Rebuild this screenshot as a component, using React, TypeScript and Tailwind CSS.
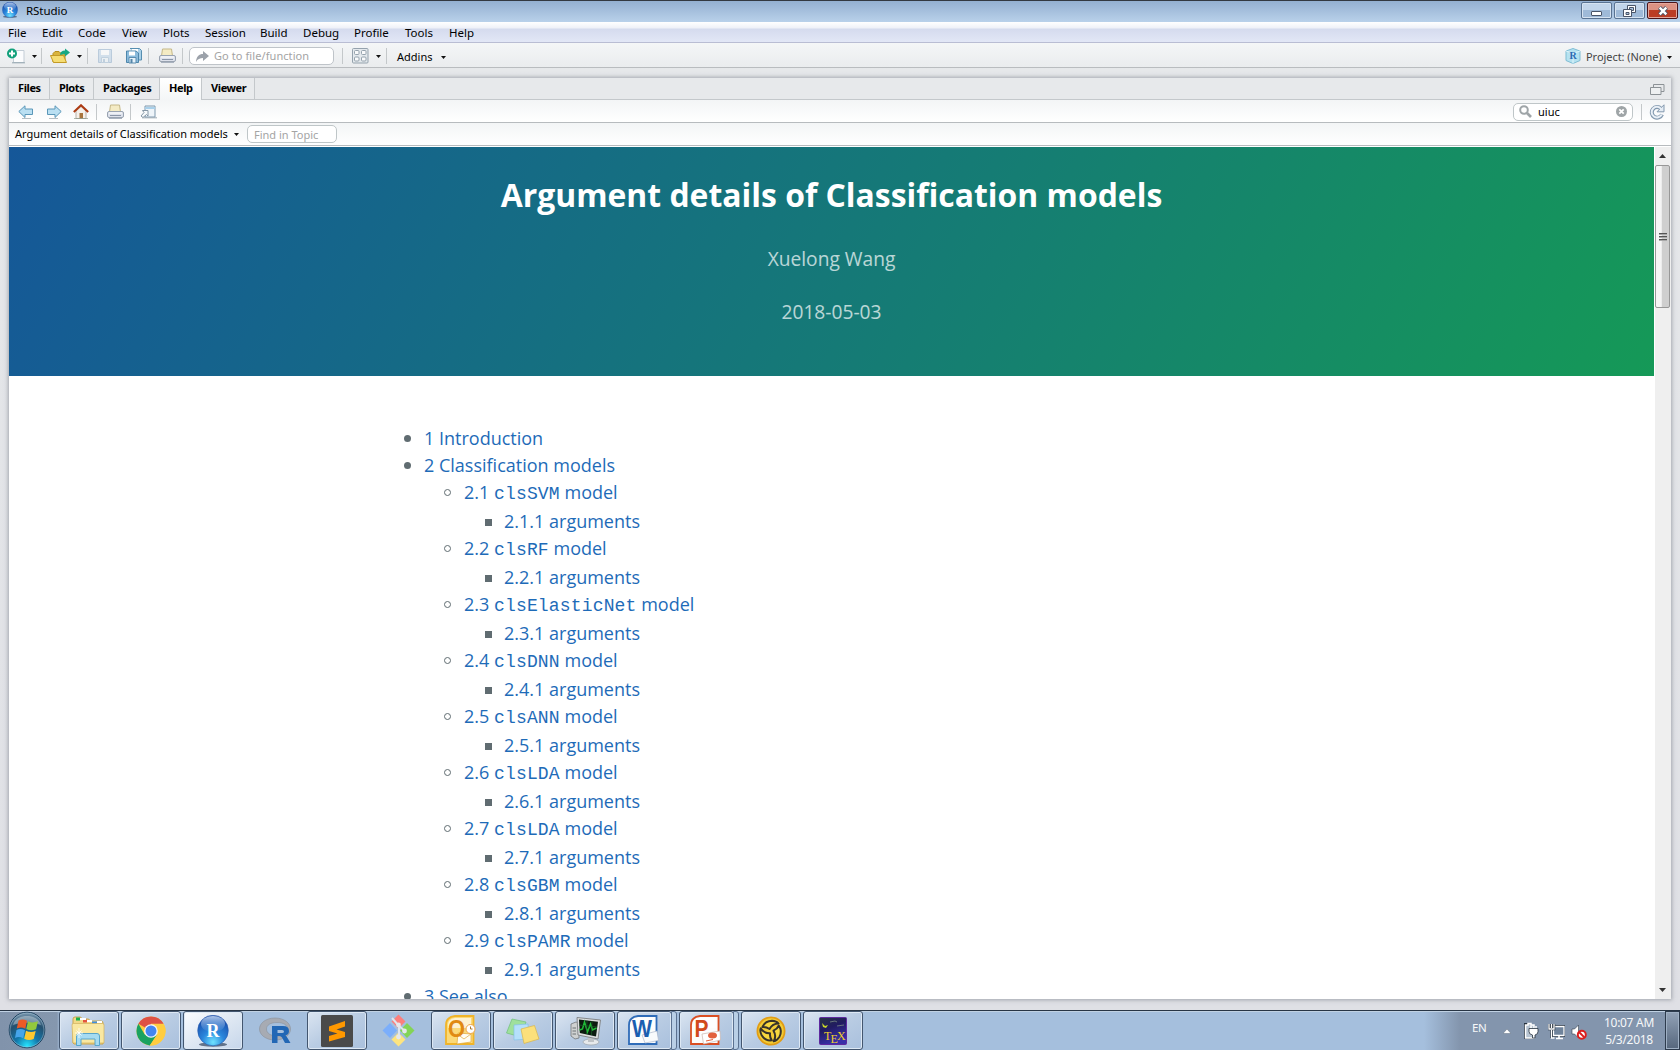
import React from "react";

const UI = "font-['Noto_Sans','Open_Sans',sans-serif]";
const DOC = "font-['Open_Sans','Noto_Sans',sans-serif]";

function Caret({ className = "" }: { className?: string }) {
  return (
    <svg className={"block shrink-0 " + className} width="5" height="3" viewBox="0 0 5 3">
      <path d="M0 0h5L2.5 3z" fill="#111" />
    </svg>
  );
}

function Sep({ className = "" }: { className?: string }) {
  return <div className={"h-4 w-px shrink-0 bg-[#c4c8ca] " + className} />;
}

function PrinterIcon({ className = "" }: { className?: string }) {
  return (
    <svg className={"block shrink-0 " + className} width="17" height="16" viewBox="0 0 17 16">
      <path d="M3.500 1h9l1 7h-11z" fill="#f4ebc4" stroke="#c5b888" />
      <rect x=".5" y="7.500" width="16" height="6" rx="1.500" fill="#dde1eb" stroke="#99a3b1" />
      <path d="M2 9h13" stroke="#fff" />
      <path d="M3 11.500h11" stroke="#8b96a8" />
      <path d="M2 14.500h13" stroke="#a9b2bf" />
    </svg>
  );
}

function NewFileIcon() {
  return (
    <svg className="ml-[7px] block shrink-0" width="18" height="16" viewBox="0 0 18 16">
      <path d="M6.500 2.500h10.500v12h-10.500z" fill="#fbfcfd" stroke="#c3cdd6" />
      <path d="M5 14.800h13" stroke="#94a5ae" />
      <circle cx="5" cy="5.500" r="5" fill="#12a07b" />
      <path d="M5 2.500v6M2 5.500h6" stroke="#fff" strokeWidth="2" />
    </svg>
  );
}

function OpenIcon() {
  return (
    <svg className="ml-[8px] block shrink-0" width="21" height="16" viewBox="0 0 21 16">
      <path d="M3 14V5.500l2-2h4l1.500 1.500H15V14z" fill="#d9b43d" stroke="#b68e1e" />
      <path d="M.5 7.500h13l3 7H3.500z" fill="#f5dd73" stroke="#c39a27" />
      <path d="M10 7c0-3 2-4.500 5-4.500V.5l5 4-5 4v-2.200c-2 0-3.500.2-5 .7z" fill="#17a883" />
    </svg>
  );
}

function SaveIcon() {
  return (
    <svg className="ml-[10px] block shrink-0 opacity-40" width="14" height="14" viewBox="0 0 14 14">
      <path d="M.5.5h13v13H.5z" fill="#a8c6e2" stroke="#6c94ba" />
      <path d="M3 1h8v5H3z" fill="#fff" />
      <path d="M3.500 8.500h7v5h-7z" fill="#e9f2f8" stroke="#80a4c4" />
      <path d="M5 10h2v3H5z" fill="#7fa3c2" />
    </svg>
  );
}

function SaveAllIcon() {
  return (
    <svg className="ml-[13px] block shrink-0" width="17" height="16" viewBox="0 0 17 16">
      <path d="M5 .5h9.500l2 2V12h-3" fill="#a8d0e8" stroke="#568eb0" />
      <path d="M7 1h6v3H7z" fill="#fff" />
      <path d="M2.500 3h8.500l2.500 2v9.500h-12V3z" fill="#8abbdc" stroke="#4d86ab" />
      <path d="M4 3.500h6v4H4z" fill="#fff" />
      <path d="M4 9.500h7V15H4z" fill="#e5f2fa" stroke="#5b8db0" />
      <path d="M5.500 11h2v4h-2z" fill="#5586a9" />
    </svg>
  );
}

function StudioBall({ size }: { size: number }) {
  return (
    <svg className="block shrink-0" width={size} height={size} viewBox="0 0 32 32">
      <defs>
        <radialGradient id="ball" cx=".5" cy=".88" r=".85">
          <stop offset="0" stopColor="#6fe3ff" />
          <stop offset=".42" stopColor="#2a86dc" />
          <stop offset="1" stopColor="#1848a6" />
        </radialGradient>
        <linearGradient id="shine" x1="0" y1="0" x2="0" y2="1">
          <stop offset="0" stopColor="#d4e4f8" stopOpacity=".8" />
          <stop offset="1" stopColor="#7fb0ea" stopOpacity=".1" />
        </linearGradient>
      </defs>
      <ellipse cx="16" cy="29.500" rx="14" ry="2.200" fill="#32435c" opacity=".7" />
      <circle cx="16" cy="15.500" r="15.300" fill="url(#ball)" stroke="#2a5db0" strokeWidth=".6" />
      <ellipse cx="16" cy="9" rx="12" ry="8" fill="url(#shine)" />
      <text x="16" y="21.500" textAnchor="middle" fontFamily="Liberation Serif, serif" fontWeight="700" fontSize="18" fill="#fff">R</text>
    </svg>
  );
}

function TitleBar() {
  return (
    <div className="flex h-[22px] shrink-0 items-start border-t border-[#333941] bg-linear-to-b from-[#94b0d1] to-[#b9d1ea]">
      <div className="ml-[2px] mt-px"><StudioBall size={16} /></div>
      <div className="ml-[8px] mt-px text-[11.500px] leading-[18px] tracking-[-0.05px] text-black">RStudio</div>
      <div className="ml-auto mr-[2px] mt-px flex gap-[2px]">
        <div className="flex h-[17px] w-[31px] items-center justify-center rounded-[2px] border border-[#5a7392] bg-linear-to-b from-[#c2d5ea] from-50% to-[#9fbad8] to-50% shadow-[inset_0_0_0_1px_#d6e3f1]">
          <div className="mt-[5px] h-[5px] w-[11px] rounded-[1px] border border-[#4a5568] bg-white" />
        </div>
        <div className="flex h-[17px] w-[31px] items-center justify-center rounded-[2px] border border-[#5a7392] bg-linear-to-b from-[#c2d5ea] from-50% to-[#9fbad8] to-50% shadow-[inset_0_0_0_1px_#d6e3f1]">
          <svg width="13" height="12" viewBox="0 0 13 12">
            <path d="M4.500.5h8v7h-8z" fill="#fff" stroke="#4a5568" />
            <path d="M6.500 2.500h4v3h-4z" fill="#a9c2de" stroke="#4a5568" />
            <path d="M.5 4.500h8v7h-8z" fill="#fff" stroke="#4a5568" />
            <path d="M3 7.500h3v2H3z" fill="#a9c2de" stroke="#4a5568" />
          </svg>
        </div>
        <div className="flex h-[17px] w-[31px] items-center justify-center rounded-[2px] border border-[#4b1419] bg-linear-to-b from-[#dc9283] from-50% to-[#bb3c24] to-50% shadow-[inset_0_0_0_1px_#e3a79c]">
          <svg width="12" height="10" viewBox="0 0 12 10">
            <path d="M2.500 1.500l7 7M9.500 1.500l-7 7" stroke="#4a5568" strokeWidth="4.200" />
            <path d="M2.700 1.700l6.600 6.600M9.300 1.700l-6.600 6.600" stroke="#fff" strokeWidth="2.400" />
          </svg>
        </div>
      </div>
    </div>
  );
}

const menu: [string, string][] = [
  ["File", "w-[34px]"],
  ["Edit", "w-[36px]"],
  ["Code", "w-[44px]"],
  ["View", "w-[41px]"],
  ["Plots", "w-[42px]"],
  ["Session", "w-[55px]"],
  ["Build", "w-[43px]"],
  ["Debug", "w-[51px]"],
  ["Profile", "w-[51px]"],
  ["Tools", "w-[44px]"],
  ["Help", "w-[40px]"],
];

function MenuBar() {
  return (
    <div className="flex h-[21px] shrink-0 border-b border-[#b9bdd3] bg-[linear-gradient(#ffffff_0,#eff1f8_6px,#d5dbee_7px,#e2e7f6_20px)] pl-[8px] text-[11.500px] leading-[21px] text-black">
      {menu.map(([label, w]) => (
        <div key={label} className={"shrink-0 whitespace-nowrap " + w}>{label}</div>
      ))}
    </div>
  );
}

function MainToolbar() {
  return (
    <div className="flex h-[25px] shrink-0 items-center border-b border-[#b9bcbf] bg-linear-to-b from-[#f4f6f7] to-[#eaecee] pt-[2px] text-[11px] text-black">
      <NewFileIcon />
      <Caret className="ml-[7px]" />
      <Sep className="ml-[4px]" />
      <OpenIcon />
      <Caret className="ml-[6px]" />
      <Sep className="ml-[5px]" />
      <SaveIcon />
      <SaveAllIcon />
      <Sep className="ml-[6px]" />
      <PrinterIcon className="ml-[10px]" />
      <Sep className="ml-[6px]" />
      <div className="ml-[6px] flex h-[18px] w-[145px] shrink-0 items-center rounded-[5px] border border-[#bfc4c9] bg-white">
        <svg className="ml-[6px]" width="13" height="12" viewBox="0 0 13 12">
          <path d="M0 12c.3-5.500 3-8 7-8V1l6 5-6 5V8C4 8 1.500 9 0 12z" fill="#9ca2aa" />
        </svg>
        <span className="ml-[5px] whitespace-nowrap text-[11px] leading-4 tracking-[0.08px] text-[#a4a4a4]">Go to file/function</span>
      </div>
      <Sep className="ml-[8px]" />
      <svg className="ml-[9px] block shrink-0" width="17" height="16" viewBox="0 0 17 16" fill="#f9fafb" stroke="#95a2ad">
        <rect x=".5" y=".5" width="15.500" height="14.500" rx="1" fill="#e4e9ed" />
        <rect x="2.500" y="2.500" width="4.500" height="4" rx="1" />
        <rect x="9.500" y="2.500" width="4.500" height="4" rx="1" />
        <rect x="2.500" y="9" width="4.500" height="4" rx="1" />
        <rect x="9.500" y="9" width="4.500" height="4" rx="1" />
      </svg>
      <Caret className="ml-[7px]" />
      <Sep className="ml-[5px]" />
      <span className="ml-[10px] mt-[2px] w-[36px] whitespace-nowrap">Addins</span>
      <Caret className="ml-[8px] mt-[2px]" />
      <svg className="ml-auto block shrink-0" width="16" height="16" viewBox="0 0 16 16">
        <path d="M8 .5l7 2.500v9.500L8 15.500 1 12.500V3z" fill="#b5e2f0" stroke="#7fbdd4" />
        <path d="M1 3l7 2.500L15 3M8 5.500v10" fill="none" stroke="#dff4fa" />
        <text x="8" y="10.500" textAnchor="middle" fontFamily="Liberation Serif, serif" fontWeight="700" fontSize="10" fill="#2b6cb4">R</text>
      </svg>
      <span className="ml-[5px] mt-[2px] w-[77px] whitespace-nowrap tracking-[-0.05px] text-[#444]">Project: (None)</span>
      <Caret className="ml-[4px] mr-[8px] mt-[2px]" />
    </div>
  );
}

const tabs: { label: string; w: string; active?: boolean }[] = [
  { label: "Files", w: "w-[41px]" },
  { label: "Plots", w: "w-[44px]" },
  { label: "Packages", w: "w-[66px]" },
  { label: "Help", w: "w-[42px]", active: true },
  { label: "Viewer", w: "w-[53px]" },
];

function TabStrip() {
  return (
    <div className="flex h-[22px] shrink-0 border-b border-[#c4c8cb] bg-[#e7e9eb]">
      {tabs.map((t) => (
        <div
          key={t.label}
          className={
            "h-[22px] shrink-0 border-r border-[#c4c8cb] pl-[9px] text-[11px] font-bold leading-[20px] tracking-[-0.4px] text-black " +
            t.w +
            (t.active ? " bg-linear-to-b from-white to-[#f4f6f7]" : " border-b bg-[#e9ebed]")
          }
        >
          {t.label}
        </div>
      ))}
      <svg className="ml-auto mr-[6px] mt-[5px] block shrink-0" width="15" height="12" viewBox="0 0 15 12">
        <path d="M3.500 4V1.500h10.500v7h-3" fill="none" stroke="#8c9296" />
        <path d="M.5 4.500h10.500v7H.5z" fill="#eef0f1" stroke="#8c9296" />
      </svg>
    </div>
  );
}

function ArrowIcon({ className }: { className: string }) {
  return (
    <svg className={"block shrink-0 " + className} width="16" height="14" viewBox="0 0 16 14">
      <path d="M.8 6.500L7 .8V4h7.500v5.500H7V12.500z" fill="#b9dff2" stroke="#5a97b8" strokeLinejoin="round" />
      <path d="M4 13.500h9" stroke="#b5bec3" />
    </svg>
  );
}

function HelpToolbar() {
  return (
    <div className="flex h-[23px] shrink-0 items-center border-b border-[#b7bbbe] bg-linear-to-b from-[#f3f5f6] to-white pt-px">
      <ArrowIcon className="ml-[9px]" />
      <ArrowIcon className="ml-[12px] -scale-x-100" />
      <svg className="ml-[11px] block shrink-0" width="16" height="15" viewBox="0 0 16 15">
        <path d="M3 7l5-4.500L13 7v7.500H3z" fill="#f5f0ea" stroke="#b9b0a8" />
        <path d="M6.500 9h3.500v5.500H6.500z" fill="#a8743d" />
        <path d="M.8 8L8 1.200 15.200 8" fill="none" stroke="#ac3a12" strokeWidth="2" />
        <path d="M1 14.800h14" stroke="#8e9c8c" />
      </svg>
      <Sep className="ml-[7px]" />
      <PrinterIcon className="ml-[10px]" />
      <Sep className="ml-[6px]" />
      <svg className="ml-[9px] block shrink-0" width="18" height="14" viewBox="0 0 18 14">
        <path d="M5 1h10v11H5z" fill="#eef4f9" stroke="#7f99ae" />
        <path d="M5 2h10v2H5z" fill="#a9d0ea" />
        <path d="M1 11l3-3.500-1.500-2h5.500v5.500L6.500 9.500 3 12.500z" fill="#f7f9fb" stroke="#8496a5" />
        <path d="M2 12.800h15" stroke="#9aa7b2" />
      </svg>
      <div className="ml-auto flex h-[18px] w-[120px] items-center rounded-[5px] border border-[#bfc6c8] bg-white">
        <svg className="ml-[5px]" width="13" height="13" viewBox="0 0 13 13">
          <circle cx="5" cy="5" r="3.800" fill="none" stroke="#9fa5a8" strokeWidth="2" />
          <path d="M8 8l4 4" stroke="#9fa5a8" strokeWidth="2.600" />
        </svg>
        <span className="ml-[6px] text-[11px] leading-4 text-black">uiuc</span>
        <svg className="ml-auto mr-[5px]" width="11" height="11" viewBox="0 0 11 11">
          <circle cx="5.500" cy="5.500" r="5.500" fill="#9fa5a7" />
          <path d="M3.300 3.300l4.400 4.400M7.700 3.300L3.300 7.700" stroke="#fff" strokeWidth="1.700" />
        </svg>
      </div>
      <Sep className="ml-[8px]" />
      <svg className="ml-[7px] mr-[6px] block shrink-0" width="16" height="16" viewBox="0 0 16 16">
        <path d="M12 4.800A5.300 5.300 0 1 0 13 10.500" fill="none" stroke="#8298ae" strokeWidth="4" />
        <path d="M15 .8v7H8z" fill="#e4ecf4" stroke="#8298ae" />
        <path d="M12.200 5A5.300 5.300 0 1 0 12.700 10.500" fill="none" stroke="#e9f0f7" strokeWidth="2" />
      </svg>
    </div>
  );
}

function TopicBar() {
  return (
    <div className="flex h-[23px] shrink-0 items-center border-b border-[#b7bbbe] bg-linear-to-b from-[#f3f5f6] to-white">
      <span className="ml-[6px] w-[213px] whitespace-nowrap text-[11px] leading-4 tracking-[-0.03px] text-black">Argument details of Classification models</span>
      <Caret className="ml-[6px]" />
      <div className="ml-[8px] flex h-[18px] w-[90px] items-center rounded-[5px] border border-[#bfc6c8] bg-white pl-[6px] pt-px text-[11px] leading-4 text-[#a4a4a4]">
        <span className="whitespace-nowrap">Find in Topic</span>
      </div>
    </div>
  );
}

const models = ["clsSVM", "clsRF", "clsElasticNet", "clsDNN", "clsANN", "clsLDA", "clsLDA", "clsGBM", "clsPAMR"];

function Row({ level, tall, children }: { level: 1 | 2 | 3; tall?: boolean; children: React.ReactNode }) {
  const indent = level === 1 ? "pl-[395px]" : level === 2 ? "pl-[435px]" : "pl-[475px]";
  return (
    <div className={"flex items-end " + indent + (tall ? " h-[29px]" : " h-[27px]")}>
      <div className="flex h-[27px] w-[20px] shrink-0 items-center">
        {level === 1 && <div className="h-[7px] w-[7px] rounded-full bg-[#606c71]" />}
        {level === 2 && <div className="h-[7px] w-[7px] rounded-full border border-[#606c71]" />}
        {level === 3 && <div className="ml-px mt-px h-[7px] w-[7px] bg-[#606c71]" />}
      </div>
      <div className="h-[27px] whitespace-nowrap text-[18px] leading-[27px] text-[#1e6bb8] [font-variant-ligatures:none]">{children}</div>
    </div>
  );
}

function HelpDocument() {
  return (
    <div className={"flex min-h-0 flex-1 overflow-hidden pt-px " + DOC}>
      <div className="min-w-0 flex-1 overflow-hidden bg-white">
        <div className="flex h-[229px] flex-col items-center bg-[linear-gradient(120deg,#155799,#159957)] pt-[25px] text-white">
          <h1 className="text-[31.900px] font-bold leading-[46px]">Argument details of Classification models</h1>
          <div className="mt-[27px] text-[19.200px] leading-[28px] opacity-70">Xuelong Wang</div>
          <div className="mt-[25px] text-[19.200px] leading-[28px] opacity-70">2018-05-03</div>
        </div>
        <div className="pt-[49px]">
          <Row level={1}>1 Introduction</Row>
          <Row level={1}>2 Classification models</Row>
          {models.map((m, i) => (
            <React.Fragment key={i}>
              <Row level={2}>
                2.{i + 1} <code className="font-['Liberation_Mono',monospace] text-[18px] leading-none tracking-[0.16px]">{m}</code> model
              </Row>
              <Row level={3} tall>2.{i + 1}.1 arguments</Row>
            </React.Fragment>
          ))}
          <Row level={1}>3 See also</Row>
        </div>
      </div>
      <div className="flex w-[17px] shrink-0 flex-col items-start border-l border-white bg-[#efefef]">
        <svg className="ml-[4px] mt-[7px] block shrink-0" width="7" height="4" viewBox="0 0 7 4"><path d="M3.500 0L7 4H0z" fill="#333" /></svg>
        <div className="mt-[7px] flex h-[143px] w-[15px] shrink-0 flex-col items-center justify-center gap-px rounded-[2px] border border-[#979797] bg-linear-to-r from-[#f5f5f5] from-40% to-[#cfcfcf] to-50%">
          <div className="h-[2px] w-[8px] border-b border-[#a9a9a9] bg-[#555]" />
          <div className="h-[2px] w-[8px] border-b border-[#a9a9a9] bg-[#555]" />
          <div className="h-[2px] w-[8px] border-b border-[#a9a9a9] bg-[#555]" />
        </div>
        <svg className="mb-[7px] ml-[4px] mt-auto block shrink-0" width="7" height="4" viewBox="0 0 7 4"><path d="M0 0h7L3.500 4z" fill="#333" /></svg>
      </div>
    </div>
  );
}

function StartOrb() {
  return (
    <svg width="38" height="38" viewBox="0 0 38 38">
      <defs>
        <radialGradient id="orb" cx=".5" cy=".95" r=".95">
          <stop offset="0" stopColor="#25e5ff" />
          <stop offset=".35" stopColor="#1277aa" />
          <stop offset=".7" stopColor="#24506f" />
          <stop offset="1" stopColor="#7f9cb3" />
        </radialGradient>
      </defs>
      <circle cx="19" cy="19" r="17.800" fill="url(#orb)" stroke="#1e4260" />
      <circle cx="19" cy="19" r="17" fill="none" stroke="#a9c8dc" strokeOpacity=".6" strokeWidth=".8" />
      <path d="M5 14C8 2 30 2 33 14c-8-3-20-3-28 0z" fill="#fff" opacity=".35" />
      <path d="M10.500 9.500c3-1.500 5.500-1.500 8.500.3l-1.700 8c-3-1.700-5.500-1.700-8.500-.3z" fill="#ec5b26" />
      <path d="M20 10.300c3.500 1.600 6 1.500 10 0l-2 8c-3.500 1.400-6.500 1.400-9.700-.2z" fill="#93c83c" />
      <path d="M8.500 19c3-1.500 5.500-1.300 8.500.3l-1.800 8c-3-1.600-5.500-1.600-8.200-.4z" fill="#46a5ea" />
      <path d="M18 19.800c3.500 1.600 6 1.500 9.700.2l-2 8c-3.500 1.300-6.300 1.200-9.500-.3z" fill="#fdc82f" />
    </svg>
  );
}

function FolderIcon() {
  return (
    <svg className="-ml-[2px] mt-px" width="34" height="32" viewBox="0 0 34 32">
      <path d="M2 28V4q0-2 2-2h5q1.500 0 2 2h6q1.500 0 2 2h11q2 0 2 2v21H3z" fill="#f1d987" stroke="#c9a64f" />
      <path d="M5 2.500h4v3H5z" fill="#19b04b" /><path d="M12 4.500h4v3h-4z" fill="#e4553e" /><path d="M21 6.500h5v3h-5z" fill="#3f8fe0" />
      <path d="M9 3h6v2H9zM16 5h5v2h-5zM26 6h5v2h-5z" fill="#fff" />
      <path d="M1 10q0-1.500 1.500-1.500h29Q33 8.500 33 10v18H2z" fill="#f9e8a2" stroke="#d3b25e" strokeWidth=".7" />
      <path d="M5.500 30.500V21q0-2.500 2.500-2.500h18q2.500 0 2.500 2.500v9.500h-4.500V24H10v6.500z" fill="#a5dbf2" stroke="#58a5cb" />
      <path d="M8 13v10M4 18h8M5.500 15.500l5 5M10.500 15.500l-5 5" stroke="#fff" strokeWidth=".8" />
    </svg>
  );
}

function ChromeIcon() {
  return (
    <svg width="30" height="30" viewBox="0 0 30 30">
      <circle cx="15" cy="15" r="14.500" fill="#ffcd40" />
      <path d="M15 15L2.400 7.700A14.500 14.500 0 0 1 27.600 7.700H15z" fill="#de5245" />
      <path d="M2.400 7.700A14.500 14.500 0 0 0 13.800 29.400L21.300 18.600 15 15 8.700 18.600z" fill="#1aa260" />
      <path d="M15 8h12.700A14.500 14.500 0 0 1 13.800 29.400L21 18.600z" fill="#ffcd40" />
      <circle cx="15" cy="15" r="6.800" fill="#f4f6fa" />
      <circle cx="15" cy="15" r="5.500" fill="#4486f0" />
    </svg>
  );
}

function RLogo() {
  return (
    <svg className="ml-px" width="34" height="28" viewBox="0 0 34 28">
      <path fillRule="evenodd" d="M16 1C7 1 .5 6 .5 12S7 23 16 23s15.500-5 15.500-11S25 1 16 1zm2 4.500c6.500 0 10.500 2.500 10.500 6.500s-4 7-10.500 7S7.500 16 7.500 12 11.500 5.500 18 5.500z" fill="#a7abb3" stroke="#8b9099" strokeWidth=".6" />
      <path fillRule="evenodd" d="M13 9h11q6 0 6 5 0 3.500-3.500 4.500 1 .5 2 2.500l3 5H26l-3-5.500q-.8-1.500-2.500-1.500H18.500v7H13zm5.500 4v3H23q2 0 2-1.500T23 13z" fill="#2267b5" />
    </svg>
  );
}

function SublimeIcon() {
  return (
    <svg width="32" height="32" viewBox="0 0 32 32">
      <rect width="32" height="32" rx="1.500" fill="#4a4a4a" />
      <path d="M8 11.500L24 6v5.500l-8.500 3L24 17v5L8 26.500V21l8.500-2.500L8 16z" fill="#ff9800" />
    </svg>
  );
}

function GitIcon() {
  return (
    <svg className="-ml-px" width="33" height="33" viewBox="0 0 33 33">
      <path d="M16.500.5l7 7-7 7-7-7z" fill="#fb7f7d" />
      <path d="M25 9l7.500 7.500-7.500 7.500-7-7.500z" fill="#83d456" />
      <path d="M16.500 18.500l7 7-7 7-7-7z" fill="#fde480" />
      <path d="M8 9l7 7.500-7 7.500L.5 16.500z" fill="#7baefb" />
      <path d="M10 4l7 8v11M17 12l6 5" fill="none" stroke="#dfe5ec" strokeWidth="2" />
      <circle cx="16.500" cy="11" r="2.400" fill="#e5e8ec" /><circle cx="22.500" cy="17" r="2.400" fill="#e5e8ec" /><circle cx="16.500" cy="23" r="2.400" fill="#e5e8ec" />
    </svg>
  );
}

function OfficeIcon({ kind }: { kind: "O" | "W" | "P" }) {
  const color = kind === "O" ? "#e18a12" : kind === "W" ? "#1b5eb0" : "#d24a1c";
  const edge = kind === "O" ? "#f0b429" : kind === "W" ? "#2f6cb8" : "#da4f24";
  return (
    <svg className="-ml-[2px] -mt-px" width="31" height="31" viewBox="0 0 31 31">
      <path d="M10 1h18.500v28H1V10q0-8 9-9z" fill={kind === "O" ? "#fbd978" : "#fcfcfc"} stroke={edge} strokeWidth="1.800" />
      <path d="M3 10q0-6 7-7h16v10H3z" fill="#fff" opacity=".65" />
      {kind === "O" && (
        <g>
          <path d="M13 18l13 1v8l-14 2z" fill="#fffdf3" stroke="#e0a739" strokeWidth=".7" />
          <path d="M12 19l7 5 7-5" fill="none" stroke="#e0a739" strokeWidth=".7" />
          <circle cx="25.500" cy="14" r="4.500" fill="#fff" stroke="#efa447" />
          <path d="M25.500 11.500V14h2" fill="none" stroke="#a67530" />
        </g>
      )}
      {kind === "W" && <path d="M14 20l15-4 1.500 9.500L17 28z" fill="#f8fafc" stroke="#aeb9cd" strokeWidth=".7" />}
      {kind === "P" && (
        <g>
          <path d="M12 19l18-3 .5 9-17 4z" fill="#fff" stroke="#c9b6b0" strokeWidth=".7" />
          <ellipse cx="22.500" cy="20.500" rx="4.500" ry="3" fill="#e2603d" />
          <path d="M16 26l7-1.500" stroke="#e2603d" />
        </g>
      )}
      <text x={kind === "W" ? 14 : 11.500} y="21.500" textAnchor="middle" fontFamily="Liberation Sans, sans-serif" fontWeight="700" fontSize="23" textLength={kind === "W" ? 20 : kind === "O" ? 17 : 14} lengthAdjust="spacingAndGlyphs" fill={color}>{kind}</text>
    </svg>
  );
}

function NotesIcon() {
  return (
    <svg width="34" height="28" viewBox="0 0 34 28">
      <path d="M6 2l14 3-5 15L.5 16z" fill="#9fe09c" stroke="#70c27a" strokeWidth=".7" />
      <path d="M8 8l14-1 1 15-15 1z" fill="#b5e0fb" stroke="#84c2e6" strokeWidth=".7" />
      <path d="M15 12l13.500-3.500L33 22l-15 4.500z" fill="#fbe07b" stroke="#d9b64a" strokeWidth=".7" />
    </svg>
  );
}

function MonitorIcon() {
  return (
    <svg width="34" height="30" viewBox="0 0 34 30">
      <path d="M3 8l5-2 3 1v15l-4 1-4-3z" fill="#cfd1d1" stroke="#64686b" strokeWidth=".7" />
      <path d="M4.500 12h3.500M4.500 15h3.500M4.500 18h3.500" stroke="#6d7274" />
      <ellipse cx="23" cy="26" rx="8" ry="3" fill="#e7eaec" stroke="#9fa6ab" strokeWidth=".7" />
      <path d="M20 21h6v5h-6z" fill="#bfc3c6" />
      <path d="M9 1.500L32.500 4 30 23 10 19z" fill="#dcdedf" stroke="#84888b" />
      <path d="M11 3.500L30 5.800 28 20.500 11.800 17z" fill="#0c1b10" />
      <path d="M11.500 14l3-1 2-7 3 10 3-8 2 6 4-2" fill="none" stroke="#20bd37" strokeWidth="1.500" />
      <path d="M11 9l18 2M19 4.500L18.500 18M24 5l-.5 14" stroke="#1a6b29" strokeWidth=".6" />
    </svg>
  );
}

function ThreadIcon() {
  const loop = "M6.500 11Q9 5 16 4.800q4.500.2 6.500 2.700-6 0-9 5.500Q10 10.500 6.500 11z";
  return (
    <svg width="30" height="30" viewBox="0 0 30 30">
      <circle cx="15" cy="15" r="13.600" fill="#f3cc35" stroke="#e29d15" strokeWidth="1.800" />
      <g fill="#f8d83f" stroke="#38332a" strokeWidth="2" strokeLinejoin="round">
        <path d={loop} />
        <path d={loop} transform="rotate(120 15 15)" />
        <path d={loop} transform="rotate(240 15 15)" />
      </g>
    </svg>
  );
}

function TexIcon() {
  return (
    <svg width="28" height="28" viewBox="0 0 28 28">
      <defs>
        <linearGradient id="tex" x1="0" y1="0" x2=".4" y2="1">
          <stop offset="0" stopColor="#263443" /><stop offset=".45" stopColor="#211b61" /><stop offset="1" stopColor="#3930a8" />
        </linearGradient>
      </defs>
      <rect x=".5" y=".5" width="27" height="27" rx="1" fill="url(#tex)" stroke="#5e299f" />
      <path d="M3 6l3 3 3-1-2 3-3-1z" fill="#c7d828" /><path d="M11 5l5-1 2 1M18 9l7-1" stroke="#68747c" fill="none" />
      <g fontFamily="Liberation Serif, serif" fontSize="12" fill="#f0cf2c">
        <text x="5" y="22.500">T</text><text x="11.500" y="25.500">E</text><text x="18" y="22.500">X</text>
      </g>
    </svg>
  );
}

type Task = { icon: React.ReactNode; kind: "window" | "active" | "pinned" | "stack" };

const tasks: Task[] = [
  { icon: <FolderIcon />, kind: "window" },
  { icon: <ChromeIcon />, kind: "window" },
  { icon: <StudioBall size={32} />, kind: "active" },
  { icon: <RLogo />, kind: "pinned" },
  { icon: <SublimeIcon />, kind: "window" },
  { icon: <GitIcon />, kind: "pinned" },
  { icon: <OfficeIcon kind="O" />, kind: "window" },
  { icon: <NotesIcon />, kind: "window" },
  { icon: <MonitorIcon />, kind: "window" },
  { icon: <OfficeIcon kind="W" />, kind: "stack" },
  { icon: <OfficeIcon kind="P" />, kind: "stack" },
  { icon: <ThreadIcon />, kind: "window" },
  { icon: <TexIcon />, kind: "window" },
];

const frame =
  "flex h-[39px] items-center justify-center rounded-[3px] border border-[#43566f] shadow-[inset_0_0_0_1px_#dde8f4] ";

function TaskButton({ icon, kind }: Task) {
  if (kind === "pinned") return <div className="flex h-[39px] w-[60px] shrink-0 items-center justify-center">{icon}</div>;
  if (kind === "stack")
    return (
      <div className="flex w-[60px] shrink-0">
        <div className={frame + "w-[55px] bg-linear-to-br from-[#dbe5f1] via-[#b9cce3] to-[#a9c0dd]"}>{icon}</div>
        <div className="-ml-px h-[39px] w-[6px] rounded-r-[3px] border border-[#5b7190] bg-[#b9cfe6]" />
      </div>
    );
  return (
    <div
      className={
        frame +
        "w-[60px] shrink-0 " +
        (kind === "active"
          ? "bg-linear-to-br from-[#fbfcfe] via-[#dfe8f3] to-[#c6d6ea]"
          : "bg-linear-to-br from-[#dbe5f1] via-[#b9cce3] to-[#a9c0dd]")
      }
    >
      {icon}
    </div>
  );
}

function Taskbar() {
  return (
    <div className="flex h-10 shrink-0 border-t border-[#273444] bg-[linear-gradient(90deg,#8193ab_0,#8597ae_57px,#a5bfdd_60px,#a5bfdd_1424px,#8395ad_1460px,#8395ad_1680px)] shadow-[inset_0_1px_0_#c0d1e3]">
      <div className="flex w-[59px] shrink-0 justify-start pl-[8px]"><StartOrb /></div>
      <div className="flex gap-[2px]">
        {tasks.map((t, i) => <TaskButton key={i} {...t} />)}
      </div>
      <div className="ml-auto flex items-center text-[#f6f8fa]">
        <span className="mb-[5px] w-[15px] text-[11.500px] leading-4 tracking-[-0.3px]">EN</span>
        <svg className="ml-[16px] mt-px" width="8" height="5" viewBox="0 0 8 5"><path d="M4 0l4 4.500H0z" fill="#fff" stroke="#4d5b70" strokeWidth=".4" /></svg>
        <svg className="ml-[13px] mt-px" width="15" height="18" viewBox="0 0 15 18">
          <path d="M4 2.500H1.500v13h7" fill="none" stroke="#26323f" strokeWidth="3" />
          <path d="M4 1.500h3v1.500h3v13H1.500V3H4z" fill="#b7c4d2" stroke="#fff" strokeWidth="1.500" />
          <path d="M7 4v4M12 4v4" stroke="#fff" strokeWidth="1.500" />
          <path d="M5 6.500h9v3q0 3-3 3.500v3H8.500v-3Q5 12.500 5 9.500z" fill="#fff" stroke="#26323f" strokeWidth=".8" />
        </svg>
        <svg className="ml-[9px] mt-px" width="17" height="17" viewBox="0 0 17 17">
          <path d="M5.500 3.500h10.500v9h-10.500z" fill="#6f839b" stroke="#26323f" strokeWidth="2.800" />
          <path d="M5.500 3.500h10.500v9h-10.500z" fill="#6f839b" stroke="#fff" strokeWidth="1.300" />
          <path d="M8 15.500h7M11 13v2" stroke="#fff" strokeWidth="1.600" />
          <path d="M1 1v5h5V1M3.500 1v4M3.500 7v8" fill="none" stroke="#26323f" strokeWidth="2.500" />
          <path d="M1 1v5h5V1M3.500 1v4M3.500 7v8h3" fill="none" stroke="#fff" strokeWidth="1.300" />
        </svg>
        <svg className="ml-[6px] mt-[3px]" width="16" height="16" viewBox="0 0 16 16">
          <path d="M1 5h2.500L7.500 1v13l-4-4H1z" fill="#fff" stroke="#333e4b" strokeWidth=".6" />
          <circle cx="10.800" cy="10.800" r="4" fill="#fff" stroke="#dc1d1d" strokeWidth="2" />
          <path d="M8 8l5.600 5.600" stroke="#dc1d1d" strokeWidth="2" />
        </svg>
        <div className="ml-[12px] w-[60px] text-center text-[12px] leading-[17px] tracking-[-0.3px]">
          <div className="whitespace-nowrap">10:07 AM</div>
          <div className="whitespace-nowrap">5/3/2018</div>
        </div>
        <div className="ml-[6px] h-full w-[15px] border border-[#2d3b4d] bg-linear-to-b from-[#93a3b8] to-[#56677d] shadow-[inset_0_0_0_1px_#9fb0c4]" />
      </div>
    </div>
  );
}

export default function App() {
  return (
    <div className={"flex h-[1050px] w-[1680px] flex-col overflow-hidden bg-[#e0e2e6] " + UI}>
      <TitleBar />
      <MenuBar />
      <MainToolbar />
      <div className="flex min-h-0 flex-1 flex-col bg-linear-to-b from-[#e6e8ea] to-[#dfe0e5] px-[9px] pb-[11px] pt-[10px]">
        <div className="flex min-h-0 flex-1 flex-col bg-white shadow-[0_0_4px_1px_rgba(110,115,125,0.55)]">
          <TabStrip />
          <HelpToolbar />
          <TopicBar />
          <HelpDocument />
        </div>
      </div>
      <Taskbar />
    </div>
  );
}
